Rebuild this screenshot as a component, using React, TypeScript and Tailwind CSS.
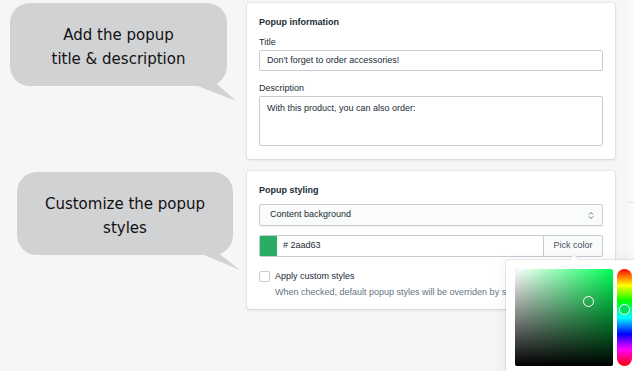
import React from "react";

function Bubble({ lines, className, tail }: { lines: string[]; className: string; tail: string }) {
  return (
    <div className={"relative " + className}>
      <div className="flex h-[83px] flex-col items-center justify-center rounded-[20px] bg-[#d1d2d4] pt-[5px] text-[15px] leading-[24px] text-[#111111]" style={{ fontFamily: '"DejaVu Sans", Verdana, sans-serif' }}>
        {lines.map((l) => (
          <div key={l}>{l}</div>
        ))}
      </div>
      <svg className="absolute left-0 top-0 overflow-visible" width="1" height="1">
        <polygon points={tail} fill="#d1d2d4" />
      </svg>
    </div>
  );
}

export default function App() {
  const font = { fontFamily: '"Liberation Sans", Arial, sans-serif' };
  return (
    <div className="relative flex h-[371px] w-[634px] overflow-hidden bg-[#f4f6f8]" style={font}>
      <div className="flex w-[247px] shrink-0 flex-col">
        <Bubble lines={["Add the popup", "title & description"]} className="ml-[10px] mt-[3px] w-[217px]" tail="180,80 206,80 226,98" />
        <Bubble lines={["Customize the popup", "styles"]} className="ml-[17px] mt-[86px] w-[216px]" tail="180,80 200,80 223,98" />
      </div>
      <div className="flex w-[368px] shrink-0 flex-col gap-[12px] pt-[3px]">
        <div className="rounded-[3px] bg-white px-[12px] pb-[13px] pt-[12px] shadow-[0_0_0_1px_rgba(63,63,68,0.05),0_1px_3px_0_rgba(63,63,68,0.15)]">
          <div className="text-[9px] font-bold leading-[14px] text-[#212b36]">Popup information</div>
          <div className="mt-[6px] text-[9px] leading-[14px] text-[#212b36]">Title</div>
          <div className="mt-[1px] flex h-[21px] items-center rounded-[2px] border border-[#c4cdd5] px-[7px] text-[9px] text-[#212b36]">Don't forget to order accessories!</div>
          <div className="mt-[10px] text-[9px] leading-[14px] text-[#212b36]">Description</div>
          <div className="mt-[1px] h-[50px] rounded-[2px] border border-[#c4cdd5] px-[7px] pt-[4px] text-[9px] leading-[14px] text-[#212b36]">With this product, you can also order:</div>
        </div>
        <div className="rounded-[3px] bg-white px-[12px] pb-[10px] pt-[12px] shadow-[0_0_0_1px_rgba(63,63,68,0.05),0_1px_3px_0_rgba(63,63,68,0.15)]">
          <div className="text-[9px] font-bold leading-[14px] text-[#212b36]">Popup styling</div>
          <div className="mt-[7px] flex h-[22px] items-center justify-between rounded-[2px] border border-[#c4cdd5] bg-[#fafbfb] pl-[10px] pr-[8px] text-[9px] text-[#212b36] shadow-[0_1px_0_rgba(22,29,37,0.05)]">
            <span>Content background</span>
            <svg width="6" height="9" viewBox="0 0 6 9">
              <path d="M1 3.5 L3 1.5 L5 3.5 M1 5.5 L3 7.5 L5 5.5" stroke="#637381" strokeWidth="1" fill="none" />
            </svg>
          </div>
          <div className="mt-[9px] flex h-[22px] rounded-[2px] border border-[#c4cdd5] text-[9px] text-[#212b36]">
            <div className="w-[17px] shrink-0 bg-[#2aad63]" />
            <div className="flex flex-1 items-center pl-[6px]"># 2aad63</div>
            <div className="flex w-[59px] items-center justify-center border-l border-[#c4cdd5] bg-[#fafbfb] text-[#454f5b]">Pick color</div>
          </div>
          <div className="mt-[12px] flex items-center gap-[5px]">
            <div className="h-[11px] w-[11px] rounded-[2px] border border-[#c4cdd5] bg-white" />
            <span className="text-[9px] leading-[14px] text-[#212b36]">Apply custom styles</span>
          </div>
          <div className="ml-[16px] mt-[2px] whitespace-nowrap text-[9px] leading-[14px] text-[#637381]">When checked, default popup styles will be overriden by settings</div>
        </div>
      </div>
      <div className="ml-[13px] flex-1 bg-[#f9fafb] pt-[202px]">
        <div className="h-px bg-[#dfe3e8]" />
      </div>

      {/* color picker popover */}
      <div className="absolute left-[506px] top-[260px] h-[130px] w-[140px] rounded-[3px] bg-white shadow-[0_0_0_1px_rgba(6,44,82,0.08),0_2px_16px_rgba(33,43,54,0.08)]">
        <div className="absolute left-[64px] top-[-4px] h-[8px] w-[8px] rotate-45 border-l border-t border-[#e8ebee] bg-white" />
        <div className="absolute left-[9px] top-[9px] h-[97px] w-[98px] overflow-hidden rounded-[2px] bg-[#00ff55]">
          <div className="absolute inset-0 bg-gradient-to-r from-white to-transparent" />
          <div className="absolute inset-0 bg-gradient-to-b from-transparent to-black" />
          <div className="absolute left-[68px] top-[27px] h-[11px] w-[11px] rounded-full border-[1.5px] border-white" />
        </div>
        <div className="absolute left-[111px] top-[9px] h-[97px] w-[15px] rounded-full bg-[linear-gradient(to_bottom,#ff0000_0%,#ffff00_17%,#00ff00_33%,#00ffff_50%,#0000ff_67%,#ff00ff_83%,#ff0000_100%)]">
          <div className="absolute left-[2px] top-[35px] h-[11px] w-[11px] rounded-full border-[1.5px] border-white bg-[#00e05a]" />
        </div>
      </div>
    </div>
  );
}
